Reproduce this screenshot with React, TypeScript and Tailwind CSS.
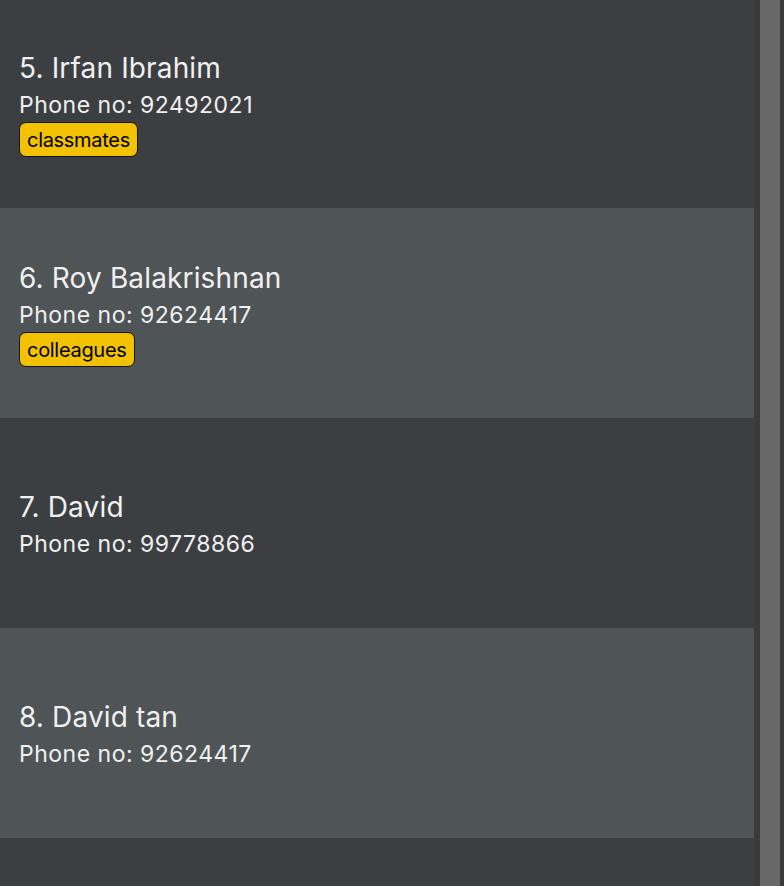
const people = [
  { index: 5, name: "Irfan Ibrahim", phone: "92492021", tags: ["classmates"] },
  { index: 6, name: "Roy Balakrishnan", phone: "92624417", tags: ["colleagues"] },
  { index: 7, name: "David", phone: "99778866", tags: [] },
  { index: 8, name: "David tan", phone: "92624417", tags: [] },
];

function PersonCard({ person, odd }: { person: (typeof people)[number]; odd: boolean }) {
  const hasTags = person.tags.length > 0;
  return (
    <div
      className={`h-[210px] shrink-0 flex flex-col justify-center px-[19px] ${odd ? "bg-[#3c3f41]" : "bg-[#4f5457]"} ${hasTags ? "" : "pt-[5px]"}`}
    >
      <div className="text-[28px] leading-[38px] text-[#f0f0f0] tracking-[0.15px]">
        {person.index}. {person.name}
      </div>
      <div className="text-[23px] leading-[37px] text-[#f0f0f0] tracking-[0.5px]">Phone no: {person.phone}</div>
      {hasTags && (
        <div className="flex gap-2 -mt-[2px]">
          {person.tags.map((t) => (
            <span
              key={t}
              className="h-[35px] flex items-center px-[7px] rounded-[7px] border border-[#141414] bg-[#f2c200] text-[20px] text-black tracking-[-0.3px]"
            >
              {t}
            </span>
          ))}
        </div>
      )}
    </div>
  );
}

export default function App() {
  return (
    <div className="w-[784px] h-[886px] overflow-hidden flex bg-[#3c3f41] font-['Inter','Noto_Sans',sans-serif]">
      <div className="w-[754px] flex flex-col -mt-[2px]">
        {people.map((p, i) => (
          <PersonCard key={p.index} person={p} odd={i % 2 === 0} />
        ))}
        <div className="flex-1 bg-[#3c3f41]" />
      </div>
      <div className="w-[30px] h-full bg-[#3a3a3a] flex pl-[6px] pr-[4px]">
        <div className="w-[20px] h-full bg-[#686868]" />
      </div>
    </div>
  );
}
